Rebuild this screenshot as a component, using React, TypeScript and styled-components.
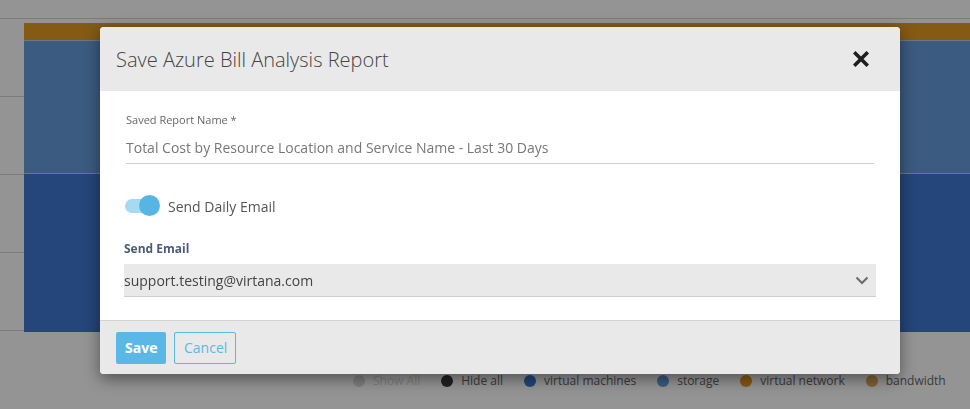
import React from "react";
import styled, { createGlobalStyle } from "styled-components";

const GlobalStyle = createGlobalStyle`
  html, body {
    margin: 0;
    padding: 0;
    background: #fdfdfd;
    font-family: "Open Sans", "Liberation Sans", sans-serif;
    overflow: hidden;
  }
`;

const legend = [
  { label: "Show All", color: "#dadada", muted: true },
  { label: "Hide all", color: "#3a3a3a" },
  { label: "virtual machines", color: "#3d79d0" },
  { label: "storage", color: "#689ddb" },
  { label: "virtual network", color: "#e39924" },
  { label: "bandwidth", color: "#dda85c" },
];

const segments = [
  { color: "#e29b25", height: 17 },
  { color: "#689ddb", height: 132 },
  { color: "#3e79d1", height: 159 },
];

export default function App() {
  return (
    <>
      <GlobalStyle />
      <Page>
        <Chart>
          <Axis>
            {[0, 1, 2, 3].map((i) => (
              <GridRow key={i} />
            ))}
          </Axis>
          <Bar>
            {segments.map((s, i) => (
              <Segment key={i} $color={s.color} style={{ height: s.height }} />
            ))}
          </Bar>
        </Chart>
        <Legend>
          {legend.map((l) => (
            <LegendItem key={l.label} $muted={l.muted}>
              <Dot $color={l.color} />
              {l.label}
            </LegendItem>
          ))}
        </Legend>
      </Page>
      <Backdrop />
      <Modal>
        <Header>
          <Title>Save Azure Bill Analysis Report</Title>
          <Close aria-label="close">
            <svg width="16" height="16" viewBox="0 0 16 16">
              <path
                d="M2.5 2.5 L13.5 13.5 M13.5 2.5 L2.5 13.5"
                stroke="#1e1e1e"
                strokeWidth="3.6"
                strokeLinecap="square"
              />
            </svg>
          </Close>
        </Header>
        <Body>
          <Field>
            <SmallLabel>Saved Report Name *</SmallLabel>
            <TextValue>
              Total Cost by Resource Location and Service Name - Last 30 Days
            </TextValue>
          </Field>
          <ToggleRow>
            <Toggle>
              <Track />
              <Knob />
            </Toggle>
            <ToggleLabel>Send Daily Email</ToggleLabel>
          </ToggleRow>
          <SelectBlock>
            <BoldLabel>Send Email</BoldLabel>
            <Select>
              <span>support.testing@virtana.com</span>
              <svg width="14" height="9" viewBox="0 0 14 9">
                <path
                  d="M1.5 1.5 L7 7 L12.5 1.5"
                  fill="none"
                  stroke="#6b6b6b"
                  strokeWidth="2"
                />
              </svg>
            </Select>
          </SelectBlock>
        </Body>
        <Footer>
          <SaveButton>Save</SaveButton>
          <CancelButton>Cancel</CancelButton>
        </Footer>
      </Modal>
    </>
  );
}

const Page = styled.div`
  width: 970px;
  height: 409px;
  padding-top: 18px;
  box-sizing: border-box;
`;

const Chart = styled.div`
  display: flex;
  border-top: 1px solid #d2d2d2;
  height: 313px;
`;

const Axis = styled.div`
  width: 24px;
  display: flex;
  flex-direction: column;
`;

const GridRow = styled.div`
  height: 77px;
  border-bottom: 1px solid #d2d2d2;
`;

const Bar = styled.div`
  flex: 1;
  padding-top: 4px;
  display: flex;
  flex-direction: column;
`;

const Segment = styled.div<{ $color: string }>`
  background: ${(p) => p.$color};
  & + & {
    border-top: 1px solid #b9cce6;
  }
`;

const Legend = styled.div`
  display: flex;
  gap: 21px;
  padding: 40px 0 0 353px;
  font-size: 12px;
  color: #666;
`;

const LegendItem = styled.div<{ $muted?: boolean }>`
  display: flex;
  align-items: center;
  gap: 8px;
  color: ${(p) => (p.$muted ? "#d8d8d8" : "#666")};
`;

const Dot = styled.span<{ $color: string }>`
  width: 12px;
  height: 12px;
  border-radius: 50%;
  background: ${(p) => p.$color};
`;

const Backdrop = styled.div`
  position: fixed;
  inset: 0;
  background: rgba(0, 0, 0, 0.415);
`;

const Modal = styled.div`
  position: absolute;
  left: 100px;
  top: 27px;
  width: 800px;
  height: 347px;
  border-radius: 4px;
  background: #fff;
  overflow: hidden;
  display: flex;
  flex-direction: column;
  box-shadow: 0 5px 16px rgba(0, 0, 0, 0.45);
`;

const Header = styled.div`
  height: 64px;
  background: #e9e9e9;
  display: flex;
  align-items: center;
  justify-content: space-between;
  padding: 0 31px 0 16px;
`;

const Title = styled.h3`
  margin: 0;
  font-size: 20px;
  font-weight: 300;
  color: #444;
`;

const Close = styled.div`
  display: flex;
  cursor: pointer;
`;

const Body = styled.div`
  flex: 1;
  display: flex;
  flex-direction: column;
  border-bottom: 1px solid #d3d3d3;
`;

const Field = styled.div`
  padding: 21px 26px 0;
`;

const SmallLabel = styled.div`
  font-size: 11px;
  color: #666;
  line-height: 16px;
`;

const TextValue = styled.div`
  margin-top: 6px;
  font-size: 14px;
  color: #777;
  line-height: 28px;
  padding-bottom: 1px;
  border-bottom: 1px solid #cfcfcf;
`;

const ToggleRow = styled.div`
  display: flex;
  align-items: center;
  gap: 8px;
  padding: 31px 25px 0;
`;

const Toggle = styled.div`
  position: relative;
  width: 35px;
  height: 22px;
`;

const Track = styled.div`
  position: absolute;
  left: 0;
  top: 4px;
  width: 30px;
  height: 14px;
  border-radius: 7px;
  background: #a6d9f2;
`;

const Knob = styled.div`
  position: absolute;
  right: 0;
  top: 0;
  width: 21px;
  height: 21px;
  border-radius: 50%;
  background: #57b5e3;
`;

const ToggleLabel = styled.span`
  font-size: 14px;
  color: #555;
`;

const SelectBlock = styled.div`
  padding: 23px 24px 0;
`;

const BoldLabel = styled.div`
  font-size: 12px;
  font-weight: 700;
  color: #4b5b79;
  line-height: 18px;
`;

const Select = styled.div`
  margin-top: 6px;
  height: 32px;
  background: #e9e9e9;
  border-bottom: 1px solid #cdcdcd;
  display: flex;
  align-items: center;
  justify-content: space-between;
  padding-right: 7px;
  font-size: 14px;
  color: #444;
`;

const Footer = styled.div`
  height: 53px;
  background: #e9e9e9;
  display: flex;
  align-items: center;
  gap: 8px;
  padding: 0 16px;
`;

const ButtonBase = styled.button`
  height: 32px;
  border-radius: 2px;
  font-family: "Open Sans", "Liberation Sans", sans-serif;
  font-size: 14px;
  padding: 0 9px;
  cursor: pointer;
`;

const SaveButton = styled(ButtonBase)`
  width: 50px;
  border: 0;
  background: #5bb8e6;
  color: #fff;
  font-weight: 700;
`;

const CancelButton = styled(ButtonBase)`
  width: 62px;
  border: 1px solid #5bb8e6;
  background: transparent;
  color: #5bb8e6;
`;
